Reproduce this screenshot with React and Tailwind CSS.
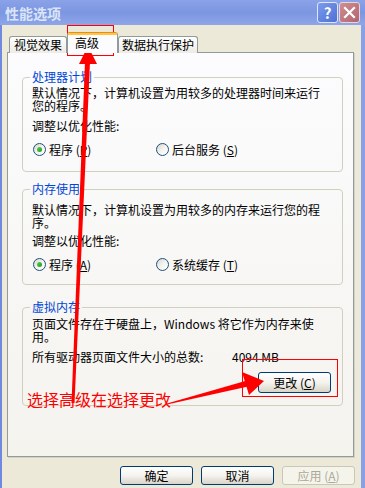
import React from "react";

// XP style "性能选项" dialog, advanced tab, with red annotation marks on top.

function Radio({ checked, children }) {
  return (
    <div className="flex items-center gap-[3px]">
      <span className="flex h-[13px] w-[13px] shrink-0 items-center justify-center rounded-full border border-[#1c5180] bg-gradient-to-br from-[#d8d5cc] via-[#f4f3ee] to-white">
        {checked && (
          <span className="h-[5px] w-[5px] rounded-full bg-gradient-to-br from-[#55d451] to-[#1a9a18]" />
        )}
      </span>
      <span className="leading-[13px]">{children}</span>
    </div>
  );
}

function XpButton({ children, disabled }) {
  const look = disabled
    ? "border-[#c9c7ba] bg-[#f5f4ea] text-[#aca899]"
    : "border-[#003c74] bg-gradient-to-b from-white via-[#f4f3ee] to-[#d9d4c8] text-black";
  return (
    <div className={`flex h-full items-center justify-center rounded-[3px] border ${look}`}>
      {children}
    </div>
  );
}

function Group({ title, className, children }) {
  return (
    <fieldset className={`w-[321px] rounded-[4px] border border-[#d0d0bf] px-[9px] ${className}`}>
      <legend className="-ml-[2px] px-[2px] text-[12px] leading-[12px] text-[#0046d5]">{title}</legend>
      {children}
    </fieldset>
  );
}

export default function App() {
  return (
    <div className="relative flex h-[488px] w-[365px] flex-col overflow-hidden bg-[#ece9d8] font-['Noto_Sans_CJK_SC','Liberation_Sans',sans-serif] text-[12px] text-black">
      {/* title bar */}
      <div className="flex h-[25px] shrink-0 items-center bg-gradient-to-b from-[#8aa2e8] via-[#7c96e1] to-[#8ea5e8] pl-[5px] pr-[5px]">
        <span className="flex-1 text-[14px] font-bold leading-[14px] text-[#dbe5f8]">性能选项</span>
        <div className="flex gap-[1px]">
          <div className="flex h-[21px] w-[21px] items-center justify-center rounded-[3px] border border-[#dfe6fa] bg-gradient-to-br from-[#7c9ceb] to-[#4d70d6] text-[15px] font-bold leading-none text-white">
            ?
          </div>
          <div className="flex h-[21px] w-[21px] items-center justify-center rounded-[3px] border border-[#e8d6da] bg-gradient-to-br from-[#cf8e94] to-[#b2646f]">
            <svg width="13" height="13" viewBox="0 0 13 13">
              <path d="M2 2 L11 11 M11 2 L2 11" stroke="white" strokeWidth="2.2" strokeLinecap="square" />
            </svg>
          </div>
        </div>
      </div>

      {/* dialog body */}
      <div className="flex flex-1 flex-col border-l-[2px] border-r-[4px] border-l-[#7088e0] border-r-[#8aa0e4] pl-[5px] pr-[4px]">
        {/* tabs */}
        <div className="relative z-10 -mb-px mt-[7px] flex items-end pl-[2px]">
          <div className="flex h-[17px] w-[58px] items-center justify-center rounded-t-[3px] border border-b-0 border-[#919b9c] bg-gradient-to-b from-white to-[#ecebe6] leading-none">
            视觉效果
          </div>
          <div className="flex h-[21px] w-[51px] flex-col rounded-t-[3px] border border-b-0 border-[#919b9c] border-t-[#e68b2c] bg-[#fcfcfe]">
            <div className="h-[2px] bg-[#ffc83c]" />
            <span className="pl-[7px] pt-[1px] leading-[13px]">高级</span>
          </div>
          <div className="flex h-[17px] w-[80px] items-center justify-center rounded-t-[3px] border border-b-0 border-[#919b9c] bg-gradient-to-b from-white to-[#ecebe6] leading-none">
            数据执行保护
          </div>
        </div>

        {/* tab page */}
        <div className="h-[405px] w-[347px] border border-[#919b9c] bg-gradient-to-b from-[#fcfcfe] to-[#f4f3ee] pl-[14px] pt-[18px] shadow-[1px_1px_0_#d5d2c4]">
          <Group title="处理器计划" className="h-[101px]">
            <div className="pt-[3px] leading-[13px]">
              <div>默认情况下，计算机设置为用较多的处理器时间来运行</div>
              <div>您的程序。</div>
              <div className="mt-[7px]">调整以优化性能:</div>
              <div className="mt-[11px] grid grid-cols-[123px_1fr] pl-[1px]">
                <Radio checked>
                  程序 (<u>P</u>)
                </Radio>
                <Radio>
                  后台服务 (<u>S</u>)
                </Radio>
              </div>
            </div>
          </Group>

          <Group title="内存使用" className="mt-[11px] h-[102px]">
            <div className="pt-[8px] leading-[13px]">
              <div>默认情况下，计算机设置为用较多的内存来运行您的程</div>
              <div>序。</div>
              <div className="mt-[5px]">调整以优化性能:</div>
              <div className="mt-[11px] grid grid-cols-[123px_1fr] pl-[1px]">
                <Radio checked>
                  程序 (<u>A</u>)
                </Radio>
                <Radio>
                  系统缓存 (<u>T</u>)
                </Radio>
              </div>
            </div>
          </Group>

          <Group title="虚拟内存" className="mt-[16px] h-[105px]">
            <div className="pt-[4px] leading-[13px]">
              <div>页面文件存在于硬盘上，Windows 将它作为内存来使</div>
              <div>用。</div>
              <div className="mt-[7px] flex">
                <span className="w-[200px]">所有驱动器页面文件大小的总数:</span>
                <span>4094 MB</span>
              </div>
              <div className="mt-[9px] flex justify-end pr-[2px]">
                <div className="h-[21px] w-[73px]">
                  <XpButton>
                    <span className="leading-[19px]">
                      更改 (<u>C</u>)
                    </span>
                  </XpButton>
                </div>
              </div>
            </div>
          </Group>
        </div>

        {/* dialog buttons */}
        <div className="mt-[9px] flex justify-end gap-[8px] pr-[2px]">
          <div className="h-[19px] w-[73px]">
            <XpButton>
              <span className="leading-[17px]">确定</span>
            </XpButton>
          </div>
          <div className="h-[19px] w-[73px]">
            <XpButton>
              <span className="leading-[17px]">取消</span>
            </XpButton>
          </div>
          <div className="h-[19px] w-[73px]">
            <XpButton disabled>
              <span className="leading-[17px]">
                应用 (<u>A</u>)
              </span>
            </XpButton>
          </div>
        </div>
      </div>

      {/* red annotations drawn over the screenshot */}
      <svg className="pointer-events-none absolute left-0 top-0" width="365" height="488" viewBox="0 0 365 488">
        <rect x="67.5" y="25.5" width="46" height="30" fill="none" stroke="#ff0000" strokeWidth="1" />
        <rect x="242.5" y="359.5" width="95" height="37" fill="none" stroke="#ff0000" strokeWidth="1" />
        <polygon points="71.5,403 74.5,403 90,62 85,62" fill="#ff0000" />
        <polygon points="88,46 79,64 97,64" fill="#ff0000" />
        <polygon points="167,403.5 247,380.5 248,386.5 167,404.5" fill="#ff0000" />
        <polygon points="264,381 242,372 249,395" fill="#ff0000" />
      </svg>
      <span className="absolute left-[27px] top-[391px] text-[16px] leading-[16px] text-[#ff0000]">
        选择高级在选择更改
      </span>
    </div>
  );
}
